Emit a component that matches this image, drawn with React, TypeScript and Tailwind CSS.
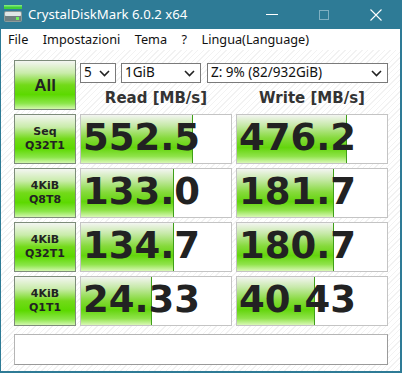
import React from "react";

const FILL =
  "bg-[linear-gradient(to_bottom,#f3f5f1_0%,#c6e9a8_22%,#86da3c_48%,#63d50c_68%,#8fe34a_86%,#d9f8b6_100%)]";
const BTN =
  "bg-[linear-gradient(to_bottom,#f4f6f2_0%,#c9ecaa_25%,#72da18_50%,#5cd900_70%,#8be64a_88%,#d3f7ae_100%)]";

function Chevron() {
  return (
    <svg width="11" height="7" viewBox="0 0 11 7" className="shrink-0">
      <path d="M1 1 L5.5 5.5 L10 1" fill="none" stroke="#222" strokeWidth="1.6" />
    </svg>
  );
}

function Select({ w, text }: { w: string; text: string }) {
  return (
    <div
      className={`${w} h-[20px] border border-[#7a7a7a] bg-white flex items-center justify-between pl-[3px] pr-[5px] text-[13.5px] text-[#111] leading-none`}
      style={{ fontFamily: '"Noto Sans", sans-serif' }}
    >
      <span>{text}</span>
      <Chevron />
    </div>
  );
}

function Btn({ l1, l2, big }: { l1: string; l2?: string; big?: boolean }) {
  return (
    <div
      className={`h-[50px] border border-[#7d8c7a] ${BTN} flex flex-col items-center justify-center text-[#222] font-bold`}
      style={{ fontFamily: big ? '"Liberation Sans", sans-serif' : '"DejaVu Sans", sans-serif' }}
    >
      {big ? (
        <span className="text-[17px] leading-none">{l1}</span>
      ) : (
        <>
          <span className="text-[11px] leading-[14px]">{l1}</span>
          <span className="text-[11px] leading-[14px]">{l2}</span>
        </>
      )}
    </div>
  );
}

function Tile({ value, fill }: { value: string; fill: number }) {
  return (
    <div className="relative h-[50px] border border-[#c4c4c4] bg-white overflow-hidden">
      <div
        className={`absolute left-0 top-0 bottom-0 ${FILL} border-r border-[#3f9f18]`}
        style={{ width: `${fill}px` }}
      />
      <div
        className="relative h-full flex items-center pl-[2px] pb-[4px] text-[37px] font-bold text-[#222] leading-none"
        style={{ fontFamily: '"DejaVu Sans", sans-serif' }}
      >
        {value}
      </div>
    </div>
  );
}

const rows = [
  { a: "Seq", b: "Q32T1", r: "552.5", rf: 112, w: "476.2", wf: 110 },
  { a: "4KiB", b: "Q8T8", r: "133.0", rf: 93, w: "181.7", wf: 97 },
  { a: "4KiB", b: "Q32T1", r: "134.7", rf: 93, w: "180.7", wf: 97 },
  { a: "4KiB", b: "Q1T1", r: "24.33", rf: 71, w: "40.43", wf: 78 },
];

export default function App() {
  return (
    <div className="w-[402px] h-[373px] flex flex-col bg-[#2e7b96] overflow-hidden">
      {/* title bar */}
      <div
        className="h-[29px] shrink-0 flex items-center text-white"
        style={{ fontFamily: '"Noto Sans", sans-serif' }}
      >
        <svg width="19" height="19" viewBox="0 0 19 19" className="ml-[4px] mr-[5px]">
          <rect x="0" y="0" width="18" height="4" fill="#3fcf3a" />
          <rect x="0" y="0" width="18" height="1.5" fill="#7fe87a" />
          <rect x="0" y="6" width="18" height="11" rx="2" fill="#8d9b9b" />
          <rect x="1" y="7" width="16" height="4" rx="1" fill="#dfe7e6" />
          <rect x="1" y="11" width="16" height="5" fill="#6f7f80" />
          <rect x="12" y="12" width="3" height="3" fill="#6ef05a" />
        </svg>
        <span className="text-[13.2px] leading-none">CrystalDiskMark 6.0.2 x64</span>
        <div className="ml-auto flex items-center">
          <div className="w-[52px] h-[29px] flex items-center justify-center">
            <div className="w-[12px] h-[1px] bg-white" />
          </div>
          <div className="w-[52px] h-[29px] flex items-center justify-center">
            <div className="w-[10px] h-[10px] border border-[#7fb0c2]" />
          </div>
          <div className="w-[52px] h-[29px] flex items-center justify-center">
            <svg width="12" height="12" viewBox="0 0 12 12">
              <path d="M0.5 0.5 L11.5 11.5 M11.5 0.5 L0.5 11.5" stroke="#fff" strokeWidth="1.1" />
            </svg>
          </div>
        </div>
      </div>
      {/* client */}
      <div className="flex-1 flex flex-col ml-[1px] mr-[2px] mb-[2px] bg-white">
        <div
          className="h-[21px] shrink-0 flex items-center pl-[7px] gap-[14.5px] text-[12.7px] text-[#111] leading-none"
          style={{ fontFamily: '"Noto Sans", sans-serif' }}
        >
          <span>File</span>
          <span>Impostazioni</span>
          <span>Tema</span>
          <span>?</span>
          <span>Lingua(Language)</span>
        </div>
        <div className="flex-1 bg-[repeating-linear-gradient(135deg,#ffffff_0px,#ffffff_3px,#f2f2f2_3px,#f2f2f2_4px)] pl-[13px] pt-[10px]">
          <div className="grid grid-cols-[62px_152px_152px] gap-x-[4px] gap-y-[4px]">
            <Btn l1="All" big />
            <div className="col-span-2 flex flex-col">
              <div className="flex items-center mt-[3px] gap-[5px]">
                <Select w="w-[36px]" text="5" />
                <Select w="w-[80px]" text="1GiB" />
                <Select w="w-[181px] ml-[1px]" text="Z: 9% (82/932GiB)" />
              </div>
              <div
                className="grid grid-cols-2 gap-x-[4px] mt-[8px] text-[15px] font-bold text-[#333] leading-none"
                style={{ fontFamily: '"DejaVu Sans", sans-serif' }}
              >
                <div className="text-center">Read [MB/s]</div>
                <div className="text-center">Write [MB/s]</div>
              </div>
            </div>
            {rows.map((r, i) => (
              <React.Fragment key={i}>
                <Btn l1={r.a} l2={r.b} />
                <Tile value={r.r} fill={r.rf} />
                <Tile value={r.w} fill={r.wf} />
              </React.Fragment>
            ))}
          </div>
          <div className="mt-[8px] w-[374px] h-[31px] border border-[#b5b5b5] border-b-[#9a9a9a] border-r-[#9a9a9a] bg-white" />
        </div>
      </div>
    </div>
  );
}
